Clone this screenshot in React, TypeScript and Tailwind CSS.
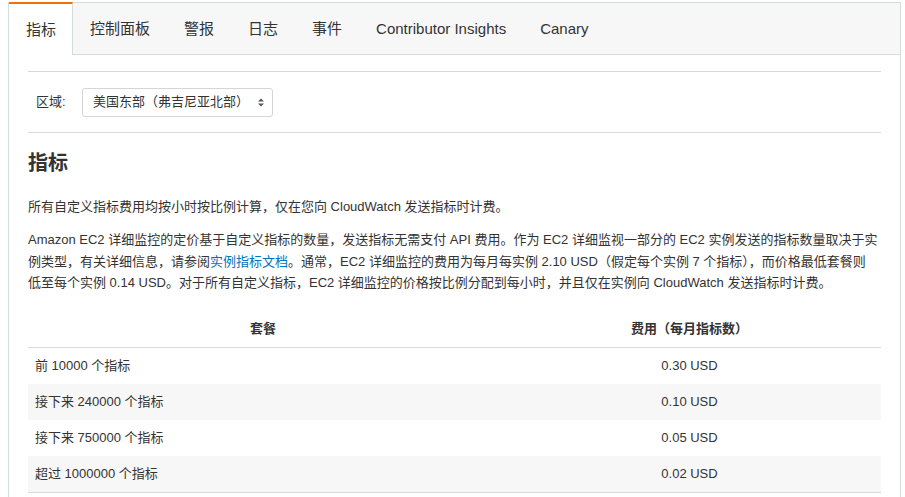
import React from "react";

const tabs = ["指标", "控制面板", "警报", "日志", "事件", "Contributor Insights", "Canary"];
const rows = [
  ["前 10000 个指标", "0.30 USD"],
  ["接下来 240000 个指标", "0.10 USD"],
  ["接下来 750000 个指标", "0.05 USD"],
  ["超过 1000000 个指标", "0.02 USD"],
];

export default function App() {
  return (
    <div className="pl-[8px] pt-[2px] pr-[4px] bg-white text-[#333] font-['Liberation_Sans','Noto_Sans_CJK_SC',sans-serif] min-h-[497px]">
      <div className="border-l border-r border-[#d5dbdb] min-h-[495px]">
        <div className="flex h-[53px] bg-[#f7f7f7] border-t border-b border-[#d5dbdb]">
          {tabs.map((t, i) =>
            i === 0 ? (
              <div
                key={t}
                className="flex items-center whitespace-nowrap pl-[17px] pr-[16px] pt-px text-[15px] bg-white border-r border-[#d5dbdb] -mt-px -mb-px border-t-2 border-t-[#ec7211]"
              >
                {t}
              </div>
            ) : (
              <div key={t} className="flex items-center whitespace-nowrap pt-px px-[17px] text-[15px]">
                {t}
              </div>
            )
          )}
        </div>
        <div className="px-[19px] pt-[16px]">
          <div className="border-t border-[#d5dbdb]" />
          <div className="flex items-center h-[60px] pl-[8px]">
            <span className="text-[13px] w-[46px]">区域:</span>
            <div className="flex items-center justify-between w-[191px] h-[29px] border border-[#d5d5d5] rounded-[3px] pl-[10px] pr-[8px] text-[13px]">
              <span>美国东部（弗吉尼亚北部）</span>
              <svg width="6" height="9" viewBox="0 0 6 9">
                <path d="M0 3.5 L3 0.5 L6 3.5 Z" fill="#555" />
                <path d="M0 5.5 L3 8.5 L6 5.5 Z" fill="#555" />
              </svg>
            </div>
          </div>
          <div className="border-t border-[#d5dbdb]" />
          <h2 className="mt-[16px] text-[20px] leading-[28px] font-bold">指标</h2>
          <p className="mt-[19px] text-[13px] leading-[21.5px]">
            所有自定义指标费用均按小时按比例计算，仅在您向 CloudWatch 发送指标时计费。
          </p>
          <p className="mt-[11.5px] text-[13px] leading-[21.5px]">
            Amazon EC2 详细监控的定价基于自定义指标的数量，发送指标无需支付 API 费用。作为 EC2 详细监视一部分的 EC2 实例发送的指标数量取决于实例类型，有关详细信息，请参阅
            <a className="text-[#0073bb]">实例指标文档</a>
            。通常，EC2 详细监控的费用为每月每实例 2.10 USD（假定每个实例 7 个指标），而价格最低套餐则
            <br />
            低至每个实例 0.14 USD。对于所有自定义指标，EC2 详细监控的价格按比例分配到每小时，并且仅在实例向 CloudWatch 发送指标时计费。
          </p>
          <div className="mt-[18px] text-[13px]">
            <div className="grid grid-cols-[470px_1fr] h-[36px] border-b border-[#d5dbdb] font-bold">
              <div className="flex items-center justify-center">套餐</div>
              <div className="flex items-center justify-center">费用（每月指标数）</div>
            </div>
            {rows.map((r, i) => (
              <div
                key={r[0]}
                className={
                  i % 2 === 1
                    ? "grid grid-cols-[470px_1fr] h-[36px] bg-[#f7f7f7]"
                    : "grid grid-cols-[470px_1fr] h-[36px]"
                }
              >
                <div className="flex items-center px-[7px]">{r[0]}</div>
                <div className="flex items-center justify-center">{r[1]}</div>
              </div>
            ))}
            <div className="border-t border-[#d5dbdb]" />
          </div>
        </div>
      </div>
    </div>
  );
}
